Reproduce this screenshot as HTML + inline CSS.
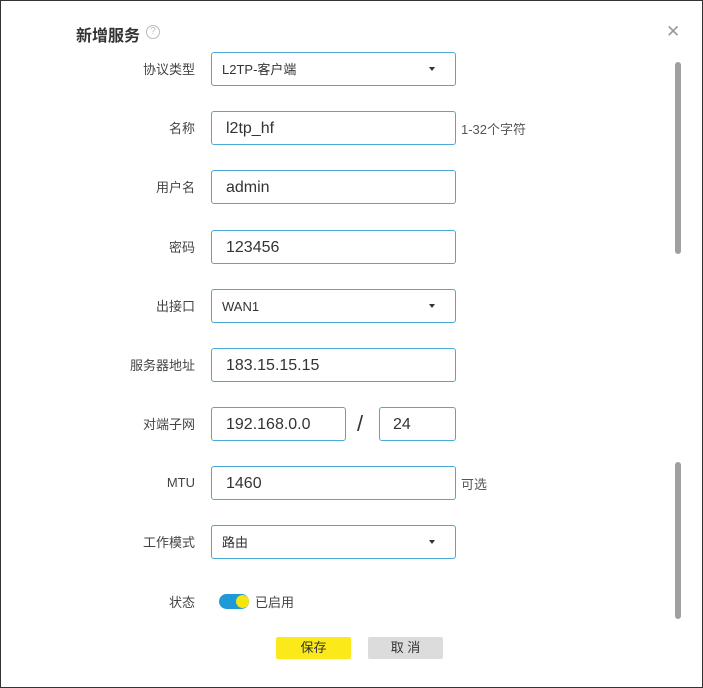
<!DOCTYPE html>
<html><head><meta charset="utf-8"><style>
body{margin:0;width:703px;height:688px;overflow:hidden;background:#fff;font-family:"Liberation Sans","Noto Sans CJK SC",sans-serif;}
.frame{position:absolute;left:0;top:0;width:701px;height:686px;border:1px solid #333;}
.title{position:absolute;left:76px;top:22px;font-size:16px;font-weight:bold;color:#333;}
.q{position:absolute;left:146px;top:25px;width:12px;height:12px;border:1px solid #bbb;border-radius:50%;font-size:10px;color:#bbb;text-align:center;line-height:12px;}
.x{position:absolute;left:666px;top:22px;font-size:17px;color:#999;}
.lab{position:absolute;width:195px;left:0;text-align:right;font-size:13px;color:#444;}
.in{position:absolute;left:211px;border:1px solid #4aa9d8;border-radius:3px;font-size:16px;color:#333;line-height:34px;padding-left:14px;box-sizing:border-box;height:34px;width:245px;}
.sel{font-size:13px;padding-left:10px;}
.sel:after{content:"";position:absolute;right:20px;top:14px;border:3.5px solid transparent;border-top:4px solid #333;}
.hint{position:absolute;left:461px;font-size:13px;color:#555;}
.sb{position:absolute;left:675px;width:6px;background:#a0a0a0;border-radius:3px;}
.btn{position:absolute;top:637px;width:75px;height:22px;border-radius:2px;font-size:13px;text-align:center;line-height:22px;color:#333;}
</style></head><body>
<div class="frame"></div>
<div class="title">新增服务</div><div class="q">?</div>
<div class="x">✕</div>
<div class="sb" style="top:62px;height:192px"></div>
<div class="sb" style="top:462px;height:157px"></div>

<div class="lab" style="top:59px">协议类型</div>
<div class="in sel" style="top:52px">L2TP-客户端</div>

<div class="lab" style="top:118px">名称</div>
<div class="in" style="top:111px">l2tp_hf</div>
<div class="hint" style="top:119px">1-32个字符</div>

<div class="lab" style="top:177px">用户名</div>
<div class="in" style="top:170px">admin</div>

<div class="lab" style="top:237px">密码</div>
<div class="in" style="top:230px">123456</div>

<div class="lab" style="top:296px">出接口</div>
<div class="in sel" style="top:289px">WAN1</div>

<div class="lab" style="top:355px">服务器地址</div>
<div class="in" style="top:348px">183.15.15.15</div>

<div class="lab" style="top:414px">对端子网</div>
<div class="in" style="top:407px;width:135px">192.168.0.0</div>
<div style="position:absolute;left:357px;top:411px;font-size:22px;color:#333">/</div>
<div class="in" style="top:407px;left:379px;width:77px;padding-left:13px">24</div>

<div class="lab" style="top:475px">MTU</div>
<div class="in" style="top:466px">1460</div>
<div class="hint" style="top:474px">可选</div>

<div class="lab" style="top:532px">工作模式</div>
<div class="in sel" style="top:525px">路由</div>

<div class="lab" style="top:592px">状态</div>
<div style="position:absolute;left:219px;top:594px;width:30px;height:15px;border-radius:8px;background:#1e9ad8"></div>
<div style="position:absolute;left:236px;top:595px;width:13px;height:13px;border-radius:50%;background:#f5e60f"></div>
<div style="position:absolute;left:255px;top:592px;font-size:13px;color:#444">已启用</div>

<div class="btn" style="left:276px;background:#fbe91a">保存</div>
<div class="btn" style="left:368px;background:#dcdcdc">取 消</div>
</body></html>
